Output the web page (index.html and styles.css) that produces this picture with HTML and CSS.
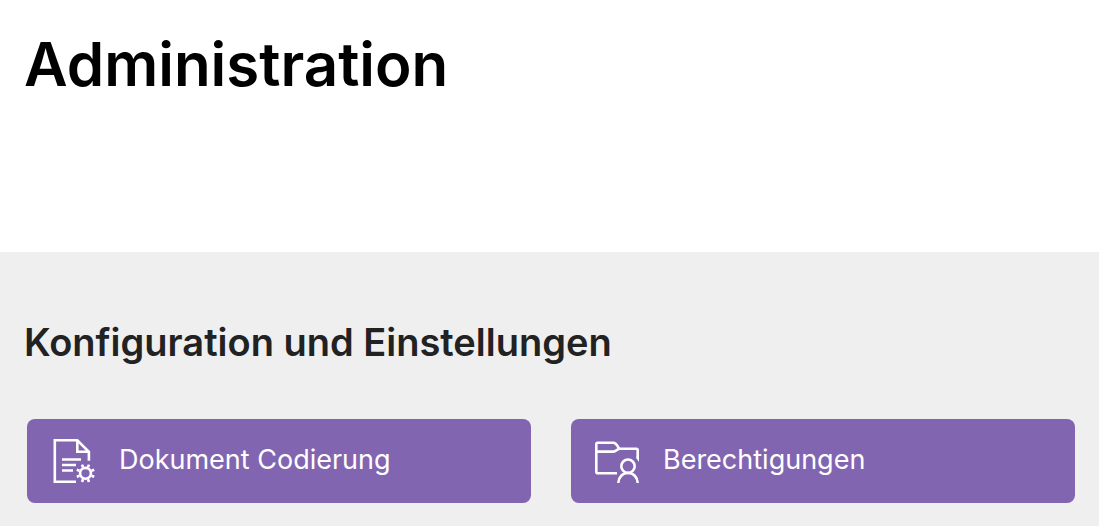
FILE: index.html
```
<!DOCTYPE html>
<html lang="de">
<head>
  <meta charset="UTF-8">
  <meta name="viewport" content="width=device-width, initial-scale=1">
  <title>Administration</title>
  <link rel="stylesheet" href="styles.css">
</head>
<body>
  <header class="page-header">
    <h1>Administration</h1>
  </header>

  <main class="settings">
    <h2>Konfiguration und Einstellungen</h2>
    <nav class="tiles">
      <a class="tile" href="#codierung">
        <svg class="icon" viewBox="0 0 44 44" aria-hidden="true">
          <path d="M25 42.7H3.8V1.3H26.3L37.9 12.7V21.7M26.3 1.3V12.7H37.9"/>
          <path d="M11 20.5H30M11 26H25M11 31.5H22"/>
          <!-- gear -->
          <circle cx="34.5" cy="34.3" r="5.4"/>
          <path d="M37 28.3L38 25.6M40.5 31.8L43.2 30.8M40.5 36.8L43.2 37.8M37 40.3L38 43M32 40.3L31 43M28.5 36.8L25.8 37.8M28.5 31.8L25.8 30.8M32 28.3L31 25.6"/>
        </svg>
        <span>Dokument Codierung</span>
      </a>
      <a class="tile" href="#berechtigungen">
        <svg class="icon" viewBox="0 0 44 44" aria-hidden="true">
          <path d="M22 34.3H2.8Q1.3 34.3 1.3 32.8V5.2Q1.3 3.7 2.8 3.7H18.5C21.5 3.7 21.8 6.5 24.3 9.7H41.2Q42.7 9.7 42.7 11.2V18.5"/>
          <path d="M1.3 12.6H18.5C21 12.6 21.5 10.5 24.3 9.7"/>
          <path class="fill" d="M41.4 17.5H44V23L41.4 19.2Z"/>
          <circle cx="33" cy="27.2" r="6.7"/>
          <path d="M23.3 44C23.6 38 27.5 34 33 34S42.4 38 42.7 44"/>
        </svg>
        <span>Berechtigungen</span>
      </a>
    </nav>
  </main>
</body>
</html>
```

FILE: styles.css
```
* {
  box-sizing: border-box;
}
body {
  margin: 0;
  min-height: 100vh;
  display: flex;
  flex-direction: column;
  font-family: Inter, "Liberation Sans", sans-serif;
  background: #fff;
}
h1, h2 {
  margin: 0;
  font-weight: 600;
}
.page-header {
  padding: 24px 24px 148px;
}
h1 {
  font-size: 60px;
  line-height: 80px;
  color: #000;
}
.settings {
  flex: 1;
  padding: 62px 24px 24px;
  background: #efefef;
}
h2 {
  font-size: 38px;
  line-height: 56px;
  color: #222;
}
.tiles {
  display: grid;
  grid-template-columns: 1fr 1fr;
  gap: 40px;
  margin-top: 49px;
  padding-left: 3px;
}
.tile {
  display: flex;
  align-items: center;
  gap: 24px;
  padding: 20px 24px;
  border-radius: 8px;
  background: #8265b1;
  color: #fff;
  font-size: 27px;
  line-height: 40px;
  text-decoration: none;
}
.tile span {
  padding-bottom: 2px;
}
.icon {
  flex: none;
  width: 44px;
  height: 44px;
  fill: none;
  stroke: #fff;
  stroke-width: 2.6;
}
.icon .fill {
  fill: #fff;
  stroke: none;
}
```
